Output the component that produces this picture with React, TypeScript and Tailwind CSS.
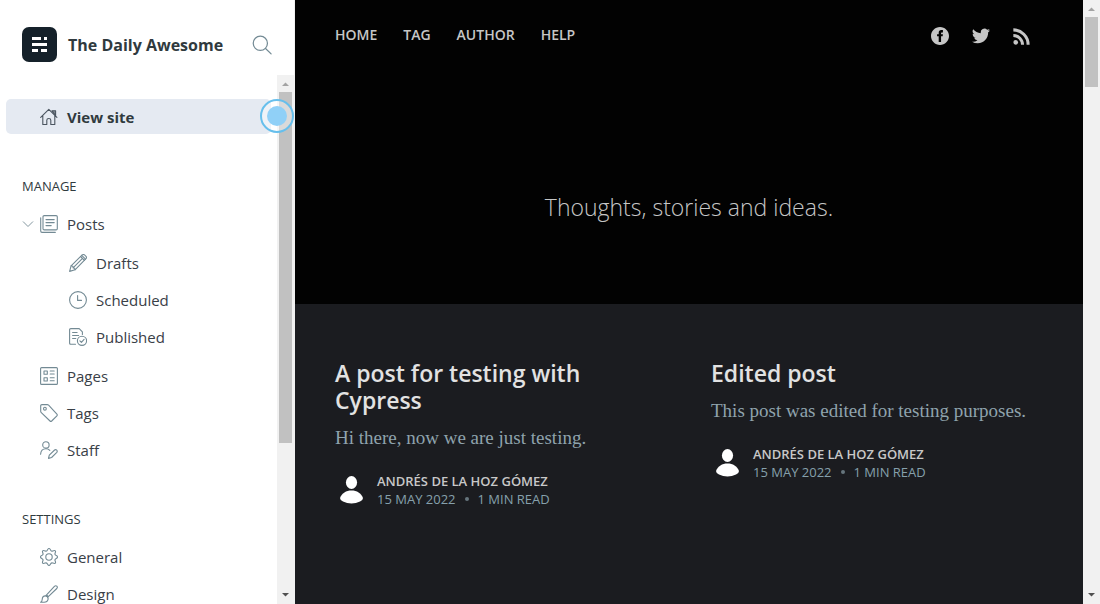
import type { ReactNode } from "react";

const sans = "font-['Open_Sans','Noto_Sans',sans-serif]";
const serif = "font-['Liberation_Serif',serif]";

function Icon({ children, className = "size-[18px] text-[#738a94]" }: { children: ReactNode; className?: string }) {
  return (
    <svg
      viewBox="0 0 18 18"
      className={"shrink-0 " + className}
      fill="none"
      stroke="currentColor"
      strokeWidth="1.1"
      strokeLinecap="round"
      strokeLinejoin="round"
      aria-hidden="true"
    >
      {children}
    </svg>
  );
}

const icons = {
  home: (
    <>
      <path d="M.7 9.400 8.800 1.300l8.100 8.100M2.800 7.800v8.700h4v-4.300q0-1.700 2-1.700t2 1.700v4.300h4V7.800" />
      <path d="M12 2.800h3.600V7.600Z" fill="currentColor" fillOpacity=".65" />
    </>
  ),
  posts: (
    <>
      <rect x="3" y=".6" width="14.3" height="14.3" rx="1.2" />
      <path d="M.7 2.800v13.300q0 1.300 1.300 1.300h13.300M6 4.600h8.200M6 7.600h8.200M6 10.600h5.200" />
    </>
  ),
  drafts: (
    <>
      <path d="m.6 17.400 1.500-5.600L13.200.9q1.200-.8 2.500.1l1.300 1.400q1 1.200 0 2.300L6 15.800Z" />
      <path d="m2.100 11.800 1.700.4.300 1.700 1.700.3.200 1.600M11.600 2.500l3.800 3.800M12.700 1.400l3.800 3.800M13.500 4.400l-9.400 9.500" />
    </>
  ),
  clock: (
    <>
      <circle cx="9" cy="9" r="8.400" />
      <path d="M8.600 4.600v4.800h3.900" />
    </>
  ),
  published: (
    <>
      <path d="M6.500 16.300H1.800Q.6 16.300.6 15.100V1.800Q.6.6 1.800.6h8.400l3.200 3.200v2.700M3.600 4.500h4.500M3.600 7.500h6M3.600 10.500h3.200" />
      <circle cx="13" cy="12.800" r="4.600" />
      <path d="m10.900 12.900 1.500 1.500 2.700-3" />
    </>
  ),
  pages: (
    <>
      <rect x=".6" y=".6" width="16.800" height="16.800" rx="1" />
      <path d="M4 4h3.300v3.300H4ZM4 10.700h3.300V14H4ZM10.200 4h4M10.200 7h4M10.200 10.700h4M10.200 13.700h4" />
    </>
  ),
  tag: (
    <>
      <path d="M.7 1.800Q.7.6 1.900.6h5.300q.8 0 1.400.6l8.300 8.900q.8.9 0 1.700l-5.200 5.200q-.9.8-1.700 0L1.300 8.600Q.7 8 .7 7.200Z" />
      <circle cx="4.900" cy="4.700" r="1.400" />
    </>
  ),
  staff: (
    <>
      <circle cx="5.900" cy="3.900" r="3.200" />
      <path d="M.6 13.300q.3-5.600 5.300-5.600 2.600 0 3.900 1.700M8.500 17.400l.8-3.200 5.300-5.200q1.100-.8 2.100.1 1 1 .1 2.200l-5.200 5.200Z" />
    </>
  ),
  gear: (
    <>
      <circle cx="9" cy="9" r="3.200" />
      <path d="M7.300 2.200Q8 .5 9 .5t1.700 1.700q.7 1.300 2.100.8 1.900-.9 2.500-.2t-.2 2.400q-.6 1.400.8 2.100 1.600.7 1.600 1.700t-1.600 1.700q-1.400.7-.8 2.100.8 1.800.2 2.400t-2.500-.2q-1.400-.5-2.100.8-.7 1.700-1.700 1.700t-1.700-1.700q-.7-1.300-2.100-.8-1.900.8-2.500.2t.2-2.400q.6-1.400-.8-2.100Q.5 10 .5 9t1.600-1.700q1.400-.7.8-2.100Q2.100 3.400 2.700 2.800t2.500.2q1.400.5 2.100-.8Z" />
    </>
  ),
  brush: (
    <>
      <path d="M6.600 9.800 14.400 1.300q1.200-1.100 2.400-.2 1.100 1.200 0 2.400L8.300 11.600ZM.6 17.200q1.500-.6 1.600-2.700.2-3.700 3.300-3.600 2.800.5 2.600 3.200-.6 3.100-4.100 3.200ZM6.600 9.800l-1.100 1.100M8.300 11.600l-.6 1.100" />
    </>
  ),
};

type IconName = keyof typeof icons;

function NavItem({ icon, label, sub = false }: { icon: IconName; label: string; sub?: boolean }) {
  return (
    <li>
      <a
        href="#"
        className={
          "flex h-[35px] items-center text-[15px] leading-5 text-[#394047] " +
          (sub ? "gap-[9px] pl-[69px]" : "gap-[9px] pl-10")
        }
      >
        <Icon>{icons[icon]}</Icon>
        {label}
      </a>
    </li>
  );
}

function ScrollBar({ thumb }: { thumb: string }) {
  return (
    <div className="flex w-[17px] shrink-0 flex-col bg-[#f1f1f1]" aria-hidden="true">
      <svg viewBox="0 0 17 17" className="size-[17px]">
        <path d="M5 11h7L8.500 7.500Z" fill="#a3a3a3" />
      </svg>
      <div className="min-h-0 flex-1 px-[2px]">
        <div className={"bg-[#c1c1c1] " + thumb} />
      </div>
      <svg viewBox="0 0 17 17" className="size-[17px]">
        <path d="M5 6h7L8.500 9.500Z" fill="#505050" />
      </svg>
    </div>
  );
}

function Sidebar() {
  return (
    <aside className="relative flex w-[295px] shrink-0 flex-col border-r border-[#f1f1f1] bg-white">
      <header className="flex h-[75px] shrink-0 items-center px-[22px] pt-[14px]">
        <svg viewBox="0 0 35 35" className="size-[35px]" aria-hidden="true">
          <rect width="35" height="35" rx="7" fill="#15212a" />
          <path d="M10 10h9v3h-9ZM22 10h3v3h-3ZM10 16h15v3H10ZM10 22h6v3h-6ZM19 22h6v3h-6Z" fill="#fff" />
        </svg>
        <span className="ml-[11px] flex-1 text-[16px] leading-6 font-bold whitespace-nowrap text-[#303a3e]">
          The Daily Awesome
        </span>
        <button type="button" aria-label="Search">
          <Icon className="size-5 text-[#738a94]">
            <circle cx="7.500" cy="7.500" r="6.400" />
            <path d="m12.200 12.200 5 4.800" />
          </Icon>
        </button>
      </header>
      <div className="flex min-h-0 flex-1">
        <nav className="min-w-0 flex-1 overflow-hidden pt-6">
          <a
            href="#"
            className="mx-[6px] flex h-[35px] items-center gap-[9px] rounded-[5px] bg-[#e5eaf2] pl-[34px] text-[15px] leading-5 font-bold text-[#303a3e]"
          >
            <Icon className="size-[18px] text-[#4b5560]">{icons.home}</Icon>
            View site
          </a>
          <h2 className="mt-11 mb-3 pl-[22px] text-[13px] leading-4 text-[#303a3e]">MANAGE</h2>
          <ul className="flex flex-col gap-[2px]">
            <li>
              <a href="#" className="flex h-[35px] items-center pl-[22px] text-[15px] leading-5 text-[#394047]">
                <svg viewBox="0 0 12 8" className="mr-[6px] h-2 w-3" fill="none" stroke="#8497a0" aria-hidden="true">
                  <path d="m1 1.500 5 5 5-5" />
                </svg>
                <Icon>{icons.posts}</Icon>
                <span className="ml-[9px]">Posts</span>
              </a>
              <ul className="flex flex-col gap-[2px] pt-1 pb-[2px]">
                <NavItem sub icon="drafts" label="Drafts" />
                <NavItem sub icon="clock" label="Scheduled" />
                <NavItem sub icon="published" label="Published" />
              </ul>
            </li>
            <NavItem icon="pages" label="Pages" />
            <NavItem icon="tag" label="Tags" />
            <NavItem icon="staff" label="Staff" />
          </ul>
          <h2 className="mt-11 mb-3 pl-[22px] text-[13px] leading-4 text-[#303a3e]">SETTINGS</h2>
          <ul className="flex flex-col gap-[2px]">
            <NavItem icon="gear" label="General" />
            <NavItem icon="brush" label="Design" />
          </ul>
        </nav>
        <ScrollBar thumb="h-[71%]" />
      </div>
      <div className="pointer-events-none absolute top-[99px] right-0 flex size-[34px] items-center justify-center rounded-full border-2 border-[#67bfec] bg-white/40">
        <div className="size-5 rounded-full bg-[#90d0f7]" />
      </div>
    </aside>
  );
}

function PostCard({ title, excerpt }: { title: string; excerpt: string }) {
  return (
    <article className="min-w-0 flex-1">
      <a href="#">
        <h2 className="max-w-[270px] text-[23px] leading-[27px] font-semibold text-[#e2e2e2]">{title}</h2>
        <p className={"mt-[10px] text-[19px] leading-7 whitespace-nowrap text-[#8fa3ad] " + serif}>{excerpt}</p>
      </a>
      <footer className="mt-5 flex items-center gap-[10px]">
        <svg viewBox="0 0 32 36" className="h-9 w-8" fill="#fff" aria-hidden="true">
          <ellipse cx="16.500" cy="10.500" rx="5.600" ry="6.500" />
          <path d="M5 26C7 21 11 18.500 16.500 18.500S26 21 28 26q0 2-3 3.500-4 2-8.500 2T8 29.500q-3-1.500-3-3.500Z" />
        </svg>
        <div className="text-[13px] leading-[18px] whitespace-nowrap">
          <a href="#" className="block font-semibold text-[#c8c8c8]">
            ANDRÉS DE LA HOZ GÓMEZ
          </a>
          <p className="flex items-center text-[#86a0ac]">
            15 MAY 2022
            <span className="mx-[9px] size-1 rounded-full bg-[#66757d]" />1 MIN READ
          </p>
        </div>
      </footer>
    </article>
  );
}

function Site() {
  return (
    <main className="min-w-0 flex-1 bg-[#1b1c20]">
      <header className="h-[304px] bg-[#020202] px-10 text-[#c6c6c6]">
        <div className="flex h-[72px] items-center justify-between pr-[13px]">
          <nav className="flex gap-[26px] pb-[2px] text-[14px] leading-5 font-semibold">
            <a href="#">HOME</a>
            <a href="#">TAG</a>
            <a href="#">AUTHOR</a>
            <a href="#">HELP</a>
          </nav>
          <div className="flex items-center gap-[23px]">
            <a href="#" aria-label="Facebook">
              <svg viewBox="0 0 32 32" className="size-[18px]" fill="currentColor">
                <path d="M16 0C7.160 0 0 7.160 0 16s7.160 16 16 16 16-7.160 16-16S24.840 0 16 0Zm5.200 9.600h-2.100c-1 0-1.200.5-1.200 1.200v2h3.300l-.5 3.500h-2.800v10.400h-4.200V16.300h-2.900v-3.500h2.900V10c0-3 1.700-4.700 4.500-4.700h3Z" />
              </svg>
            </a>
            <a href="#" aria-label="Twitter">
              <svg viewBox="0 0 24 24" className="size-[18px]" fill="currentColor">
                <path d="M23.950 4.570a10 10 0 0 1-2.820.77 4.960 4.960 0 0 0 2.160-2.720c-.95.550-2 .950-3.130 1.180a4.920 4.920 0 0 0-8.380 4.480C7.690 8.100 4.070 6.130 1.640 3.160a4.920 4.920 0 0 0 1.520 6.570 4.900 4.900 0 0 1-2.230-.610v.060a4.920 4.920 0 0 0 3.950 4.830 5 5 0 0 1-2.210.080 4.940 4.940 0 0 0 4.600 3.420A9.870 9.870 0 0 1 0 19.540a13.990 13.990 0 0 0 7.550 2.210c9.050 0 14-7.500 14-13.980 0-.210 0-.420-.020-.630a9.940 9.940 0 0 0 2.460-2.550Z" />
              </svg>
            </a>
            <a href="#" aria-label="RSS">
              <svg viewBox="0 0 24 24" className="size-[17px]" fill="currentColor">
                <circle cx="3.800" cy="20.200" r="3.300" />
                <path d="M.5 8.500v4.200A10.800 10.800 0 0 1 11.300 23.500h4.300A15.100 15.100 0 0 0 .5 8.500Zm0-8v4.300a18.700 18.700 0 0 1 18.700 18.700h4.300A23 23 0 0 0 .5.5Z" />
              </svg>
            </a>
          </div>
        </div>
        <p className="pt-[117px] text-center text-[23px] leading-9 font-light whitespace-nowrap">
          Thoughts, stories and ideas.
        </p>
      </header>
      <section className="flex gap-11 px-10 pt-14">
        <PostCard title="A post for testing with Cypress" excerpt="Hi there, now we are just testing." />
        <PostCard title="Edited post" excerpt="This post was edited for testing purposes." />
      </section>
    </main>
  );
}

export default function App() {
  return (
    <div className={"flex h-screen overflow-hidden " + sans}>
      <Sidebar />
      <Site />
      <ScrollBar thumb="h-[70px]" />
    </div>
  );
}
